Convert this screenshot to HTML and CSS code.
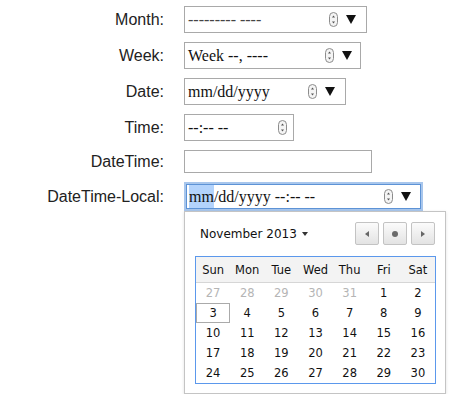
FILE: index.html
```html
<!DOCTYPE html>
<html lang="en">
<head>
    <meta charset="UTF-8">
    <title>Date inputs</title>
    <link rel="stylesheet" href="styles.css">
</head>
<body>
    <div class="formulario">
        <label class="rotulo">Month:</label>
        <div class="campo mes">
            <span class="valor">--------- ----</span>
            <svg class="spin" width="9" height="15" viewBox="0 0 9 15"><rect x="0.5" y="0.5" width="8" height="14" rx="4" fill="#f4f4f4" stroke="#8c8c8c"/><path d="M3 5.5 L4.5 3.5 L6 5.5Z M3 9.5 L4.5 11.5 L6 9.5Z" fill="#555"/></svg>
            <span class="seta"></span>
        </div>

        <label class="rotulo">Week:</label>
        <div class="campo semana">
            <span class="valor">Week --, ----</span>
            <svg class="spin" width="9" height="15" viewBox="0 0 9 15"><rect x="0.5" y="0.5" width="8" height="14" rx="4" fill="#f4f4f4" stroke="#8c8c8c"/><path d="M3 5.5 L4.5 3.5 L6 5.5Z M3 9.5 L4.5 11.5 L6 9.5Z" fill="#555"/></svg>
            <span class="seta"></span>
        </div>

        <label class="rotulo">Date:</label>
        <div class="campo data">
            <span class="valor">mm/dd/yyyy</span>
            <svg class="spin" width="9" height="15" viewBox="0 0 9 15"><rect x="0.5" y="0.5" width="8" height="14" rx="4" fill="#f4f4f4" stroke="#8c8c8c"/><path d="M3 5.5 L4.5 3.5 L6 5.5Z M3 9.5 L4.5 11.5 L6 9.5Z" fill="#555"/></svg>
            <span class="seta"></span>
        </div>

        <label class="rotulo">Time:</label>
        <div class="campo hora">
            <span class="valor">--:-- --</span>
            <svg class="spin" width="9" height="15" viewBox="0 0 9 15"><rect x="0.5" y="0.5" width="8" height="14" rx="4" fill="#f4f4f4" stroke="#8c8c8c"/><path d="M3 5.5 L4.5 3.5 L6 5.5Z M3 9.5 L4.5 11.5 L6 9.5Z" fill="#555"/></svg>
        </div>

        <label class="rotulo">DateTime:</label>
        <div class="campo texto"></div>

        <label class="rotulo">DateTime-Local:</label>
        <div class="campo local">
            <span class="valor"><span class="selecao">mm</span>/dd/yyyy --:-- --</span>
            <svg class="spin" width="9" height="15" viewBox="0 0 9 15"><rect x="0.5" y="0.5" width="8" height="14" rx="4" fill="#f4f4f4" stroke="#8c8c8c"/><path d="M3 5.5 L4.5 3.5 L6 5.5Z M3 9.5 L4.5 11.5 L6 9.5Z" fill="#555"/></svg>
            <span class="seta"></span>
        </div>

        <!-- popup do datetime-local -->
        <div class="calendario">
            <div class="topo">
                <span class="mes-ano">November 2013 <span class="caret"></span></span>
                <div class="navegacao">
                    <button class="nav"><span class="tri-esq"></span></button>
                    <button class="nav"><span class="ponto"></span></button>
                    <button class="nav"><span class="tri-dir"></span></button>
                </div>
            </div>
            <div class="tabela">
                <div class="cabecalho">
                    <span>Sun</span><span>Mon</span><span>Tue</span><span>Wed</span><span>Thu</span><span>Fri</span><span>Sat</span>
                </div>
                <div class="dias">
                    <span class="fora">27</span><span class="fora">28</span><span class="fora">29</span><span class="fora">30</span><span class="fora">31</span><span>1</span><span>2</span>
                    <span class="hoje">3</span><span>4</span><span>5</span><span>6</span><span>7</span><span>8</span><span>9</span>
                    <span>10</span><span>11</span><span>12</span><span>13</span><span>14</span><span>15</span><span>16</span>
                    <span>17</span><span>18</span><span>19</span><span>20</span><span>21</span><span>22</span><span>23</span>
                    <span>24</span><span>25</span><span>26</span><span>27</span><span>28</span><span>29</span><span>30</span>
                </div>
            </div>
        </div>
    </div>
</body>
</html>
```

FILE: styles.css
```css
* {
    margin: 0;
    padding: 0;
    box-sizing: border-box;
}

body {
    background: #fff;
    font-family: "Liberation Sans", Arial, sans-serif;
    color: #222;
}

.formulario {
    display: grid;
    grid-template-columns: 164px auto;
    column-gap: 20px;
    row-gap: 9px;
    align-items: center;
    justify-items: start;
    padding-top: 6px;
}

.rotulo {
    justify-self: end;
    font-size: 16px;
}

.campo {
    display: flex;
    align-items: center;
    height: 27px;
    border: 1px solid #a9a9a9;
    padding: 0 10px 0 3px;
    font-family: "Liberation Serif", "Times New Roman", serif;
    font-size: 16px;
    color: #111;
    background: #fff;
}

.valor {
    flex: 1;
    white-space: nowrap;
}

.mes .valor {
    color: #444;
}

.spin {
    display: block;
}

.seta {
    width: 0;
    height: 0;
    margin-left: 8px;
    border-left: 5px solid transparent;
    border-right: 5px solid transparent;
    border-top: 9px solid #111;
}

.mes {
    width: 183px;
}

.semana {
    width: 177px;
    padding-right: 8px;
}

.data {
    width: 162px;
}

.hora {
    width: 110px;
    padding-right: 6px;
}

.texto {
    width: 188px;
    height: 23px;
}

.local {
    width: 235px;
    height: 25px;
    margin: 2px;
    border-color: #5d93d6;
    box-shadow: 0 0 0 2px #a8c6ec;
    padding-left: 2px;
    padding-right: 9px;
}

.selecao {
    background: #b3d3fc;
    padding: 3px 0;
}

.calendario {
    grid-column: 2;
    margin-top: -9px;
    width: 262px;
    height: 183px;
    border: 1px solid #c4c4c4;
    background: #fff;
    box-shadow: 0 1px 3px rgba(0, 0, 0, 0.12);
    padding: 10px 10px 0 10px;
    font-family: "DejaVu Sans", Verdana, sans-serif;
    font-size: 11.5px;
    color: #111;
}

.topo {
    display: flex;
    align-items: center;
    justify-content: space-between;
    height: 23px;
    margin-bottom: 11px;
}

.mes-ano {
    padding-left: 5px;
    font-size: 12px;
    display: flex;
    align-items: center;
    gap: 3px;
}

.caret {
    width: 0;
    height: 0;
    margin-left: 2px;
    border-left: 3.5px solid transparent;
    border-right: 3.5px solid transparent;
    border-top: 4px solid #333;
}

.navegacao {
    display: flex;
    gap: 4px;
}

.nav {
    width: 24px;
    height: 23px;
    border: 1px solid #c3c3c3;
    border-radius: 2px;
    background: linear-gradient(#fbfbfb, #e3e3e3);
    display: flex;
    align-items: center;
    justify-content: center;
}

.tri-esq {
    width: 0;
    height: 0;
    border-top: 3px solid transparent;
    border-bottom: 3px solid transparent;
    border-right: 4px solid #666;
}

.tri-dir {
    width: 0;
    height: 0;
    border-top: 3px solid transparent;
    border-bottom: 3px solid transparent;
    border-left: 4px solid #666;
}

.ponto {
    width: 6px;
    height: 6px;
    border-radius: 50%;
    background: #6a6a6a;
}

.tabela {
    width: 241px;
    border: 1px solid #5b98ec;
}

.cabecalho {
    display: grid;
    grid-template-columns: repeat(7, 1fr);
    height: 26px;
    align-items: center;
    background: #f3f3f3;
    border-bottom: 1px solid #d6d6d6;
    text-align: center;
}

.dias {
    display: grid;
    grid-template-columns: repeat(7, 1fr);
    grid-auto-rows: 20px;
    text-align: center;
}

.dias span {
    line-height: 20px;
}

.dias .fora {
    color: #b5b5b5;
}

.dias .hoje {
    border: 1px solid #aaa;
    line-height: 18px;
}
```
